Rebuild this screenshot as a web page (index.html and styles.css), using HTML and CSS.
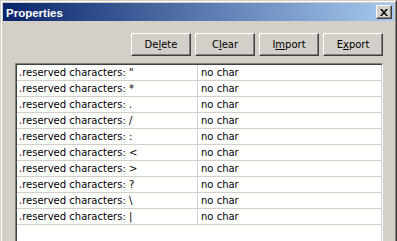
FILE: index.html
```html
<!DOCTYPE html>
<html>
<head>
    <title>Properties</title>
    <link rel="stylesheet" href="styles.css">
</head>
<body>
    <div class="window">
        <div class="frame">
            <!-- Title bar -->
            <div class="titleBar">
                <span class="title">Properties</span>
                <button class="closeButton" title="Close">
                    <svg width="8" height="7" viewBox="0 0 8 7">
                        <path d="M0 0h2l2 2.5L6 0h2L5 3.5 8 7H6L4 4.5 2 7H0l3-3.5z" fill="#000"/>
                    </svg>
                </button>
            </div>

            <!-- Buttons -->
            <div class="toolbar">
                <button class="winButton">De<u>l</u>ete</button>
                <button class="winButton">C<u>l</u>ear</button>
                <button class="winButton">I<u>m</u>port</button>
                <button class="winButton">E<u>x</u>port</button>
            </div>

            <!-- Property list -->
            <div class="listBox">
                <div class="row"><div class="cell name">.reserved characters: "</div><div class="cell">no char</div></div>
                <div class="row"><div class="cell name">.reserved characters: *</div><div class="cell">no char</div></div>
                <div class="row"><div class="cell name">.reserved characters: .</div><div class="cell">no char</div></div>
                <div class="row"><div class="cell name">.reserved characters: /</div><div class="cell">no char</div></div>
                <div class="row"><div class="cell name">.reserved characters: :</div><div class="cell">no char</div></div>
                <div class="row"><div class="cell name">.reserved characters: &lt;</div><div class="cell">no char</div></div>
                <div class="row"><div class="cell name">.reserved characters: &gt;</div><div class="cell">no char</div></div>
                <div class="row"><div class="cell name">.reserved characters: ?</div><div class="cell">no char</div></div>
                <div class="row"><div class="cell name">.reserved characters: \</div><div class="cell">no char</div></div>
                <div class="row"><div class="cell name">.reserved characters: |</div><div class="cell">no char</div></div>
            </div>
        </div>
    </div>
</body>
</html>
```
FILE: styles.css
```css
body {
    margin: 0;
    background-color: #d4d0c8;
    font-family: "DejaVu Sans", sans-serif;
    font-size: 10px;
    color: #000;
    overflow: hidden;
}

.window {
    height: 260px;
    border: 1px solid;
    border-color: #d4d0c8 #404040 #404040 #d4d0c8;
}

.frame {
    height: 100%;
    box-sizing: border-box;
    border: 1px solid;
    border-color: #fff #808080 #808080 #fff;
    padding: 1px;
    display: flex;
    flex-direction: column;
}

.titleBar {
    height: 18px;
    display: flex;
    align-items: center;
    justify-content: space-between;
    padding: 0 2px 0 3px;
    background: linear-gradient(to right, #0a246a, #a6caf0);
}

.title {
    color: white;
    font-family: "Liberation Sans", Arial, sans-serif;
    font-weight: bold;
    font-size: 11.5px;
    padding-top: 1px;
}

.closeButton {
    width: 16px;
    height: 14px;
    padding: 0;
    display: flex;
    justify-content: center;
    align-items: center;
    background-color: #d4d0c8;
    border: 1px solid;
    border-color: #fff #404040 #404040 #fff;
    box-shadow: inset -1px -1px #808080;
}

.toolbar {
    display: flex;
    justify-content: flex-end;
    gap: 4px;
    padding: 12px 11px 0 0;
}

.winButton {
    width: 60px;
    height: 23px;
    padding: 0;
    font-family: "DejaVu Sans", sans-serif;
    font-size: 10px;
    color: #000;
    background-color: #d4d0c8;
    border: 1px solid;
    border-color: #fff #404040 #404040 #fff;
    box-shadow: inset -1px -1px #808080;
}

.listBox {
    flex: 1;
    margin: 7px 11px 0 12px;
    background-color: white;
    border: 1px solid;
    border-color: #808080 #fff #fff #808080;
    box-shadow: inset 1px 1px #404040, inset -1px -1px #d4d0c8;
    padding: 1px;
}

.row {
    display: grid;
    grid-template-columns: 181px 1fr;
    height: 16px;
    box-sizing: border-box;
    border-bottom: 1px solid #d4d0c8;
}

.cell {
    line-height: 15px;
    padding-left: 3px;
    white-space: nowrap;
}

.name {
    padding-left: 2px;
    border-right: 1px solid #d4d0c8;
}
```
